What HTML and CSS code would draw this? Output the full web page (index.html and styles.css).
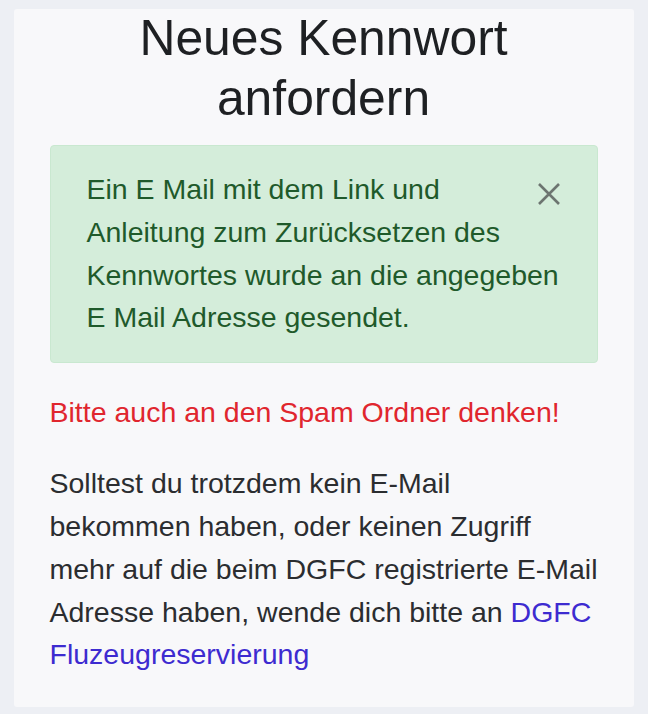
FILE: index.html
```html
<!DOCTYPE html>
<html lang="de">
<head>
<meta charset="utf-8">
<title>Neues Kennwort anfordern</title>
<link rel="stylesheet" href="styles.css">
</head>
<body>
<main class="card">
  <h1 class="title">Neues Kennwort anfordern</h1>
  <div class="alert">
    <p class="alert-text">Ein E Mail mit dem Link und Anleitung zum Zurücksetzen des Kennwortes wurde an die angegeben E Mail Adresse gesendet.</p>
    <button class="close" type="button" aria-label="Schließen">
      <svg viewBox="0 0 24 24" width="24" height="24"><path d="M2 2 L22 22 M22 2 L2 22" /></svg>
    </button>
  </div>
  <p class="warn">Bitte auch an den Spam Ordner denken!</p>
  <p class="text">Solltest du trotzdem kein E-Mail bekommen haben, oder keinen Zugriff mehr auf die beim DGFC registrierte E-Mail Adresse haben, wende dich bitte an <a class="link" href="#">DGFC Fluzeugreservierung</a></p>
</main>
</body>
</html>
```

FILE: styles.css
```css
html, body {
  margin: 0;
  padding: 0;
}
body {
  background: #edeff4;
  padding: 9px 14px;
  font-family: "Liberation Sans", Arial, sans-serif;
  font-size: 28.5px;
  line-height: 1.5;
  color: #2b2d30;
}
.card {
  background: #f8f8fa;
  border-radius: 3px;
  padding: 0 36.5px 31px 35.5px;
  min-height: 696px;
  box-sizing: border-box;
}
.title {
  margin: 0 0 16px;
  font-size: 49.8px;
  line-height: 1.2;
  font-weight: 400;
  text-align: center;
  color: #1e2023;
}
.alert {
  position: relative;
  background: #d4edda;
  border: 1.8px solid #c9e8d0;
  border-radius: 4px;
  padding: 22.6px 36px;
  margin-bottom: 28.5px;
  color: #1f5a2b;
}
.alert-text {
  margin: 0;
}
.close {
  position: absolute;
  top: 36px;
  right: 36px;
  width: 24px;
  height: 24px;
  padding: 0;
  border: 0;
  background: transparent;
  display: flex;
}
.close svg {
  stroke: #6c7570;
  stroke-width: 2.6;
  fill: none;
}
.warn {
  margin: 0 0 28.5px;
  color: #e0262e;
}
.text {
  margin: 0;
}
.link {
  color: #3d2bd0;
  text-decoration: none;
}
```
